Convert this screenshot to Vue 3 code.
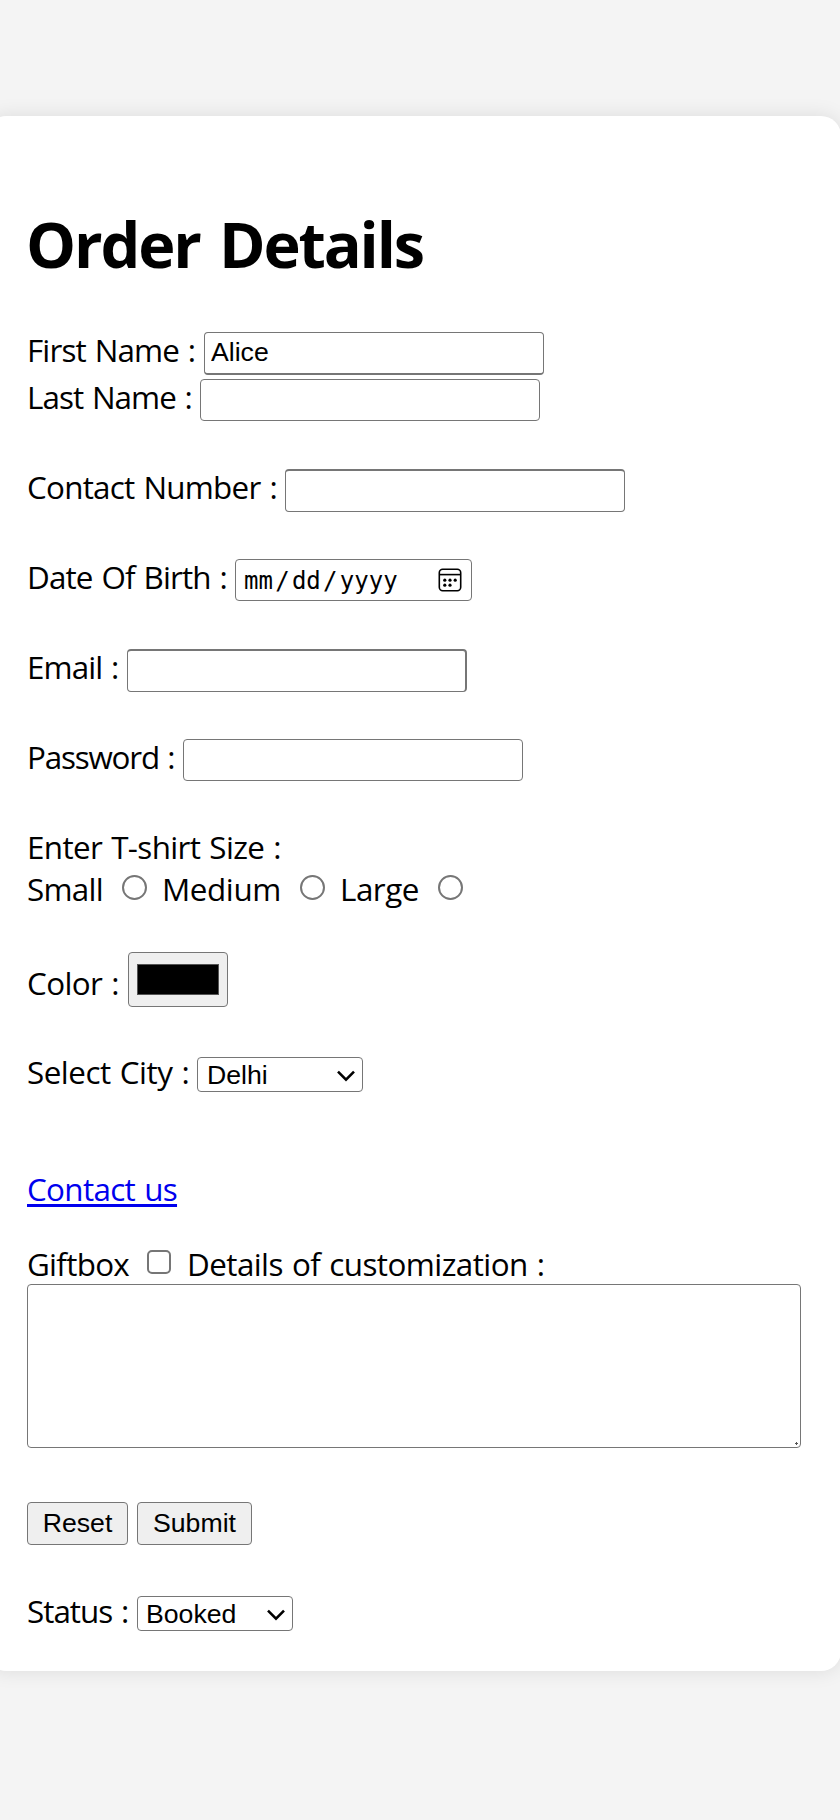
<script setup>
import { ref } from 'vue'

const firstName = ref('Alice')
const city = ref('Delhi')
const status = ref('Booked')
</script>

<template>
  <main class="page">
    <form class="card" @submit.prevent>
      <h1>Order Details</h1>

      <div class="row first">
        <label class="text" for="first">First Name :</label>
        <input id="first" v-model="firstName" class="field heavy-bottom" type="text">
      </div>
      <div class="row last">
        <label class="text" for="last">Last Name :</label>
        <input id="last" class="field" type="text">
      </div>
      <div class="row contact">
        <label class="text" for="contact">Contact Number :</label>
        <input id="contact" class="field heavy-top" type="tel">
      </div>
      <div class="row birth">
        <span class="text">Date Of Birth :</span>
        <div class="date">
          <span>mm</span><i>/</i><span>dd</span><i>/</i><span>yyyy</span>
          <svg class="calendar" viewBox="0 0 24 24" width="24" height="24" fill="none" stroke="#000" stroke-width="1.6">
            <rect x="1.3" y="1.3" width="21.4" height="21.4" rx="3.4" />
            <path d="M1.3 6.6h21.4" />
            <g fill="#000" stroke="none">
              <circle cx="6.8" cy="12.2" r="1.6" /><circle cx="12" cy="12.2" r="1.6" /><circle cx="17.2" cy="12.2" r="1.6" />
              <circle cx="6.8" cy="17.2" r="1.6" /><circle cx="12" cy="17.2" r="1.6" />
            </g>
          </svg>
        </div>
      </div>
      <div class="row email">
        <label class="text" for="email">Email :</label>
        <input id="email" class="field heavy-top heavy-right" type="email">
      </div>
      <div class="row password">
        <label class="text" for="password">Password :</label>
        <input id="password" class="field" type="password">
      </div>

      <div class="row size-title"><span class="text">Enter T-shirt Size :</span></div>
      <div class="row sizes">
        <span class="text small">Small</span><input class="radio" type="radio" name="size">
        <span class="text medium">Medium</span><input class="radio" type="radio" name="size">
        <span class="text large">Large</span><input class="radio" type="radio" name="size">
      </div>

      <div class="row color">
        <span class="text">Color :</span>
        <div class="swatch"><div class="swatch-fill"></div></div>
      </div>

      <div class="row city">
        <label class="text" for="city">Select City :</label>
        <div class="select-box">
          <select id="city" v-model="city"><option>Delhi</option></select>
          <svg class="chevron" viewBox="0 0 18 12" width="18" height="12" fill="none" stroke="#000" stroke-width="2.6">
            <path d="M1 1.6 9 9.6l8-8" />
          </svg>
        </div>
      </div>

      <div class="row link"><a class="text" href="#">Contact us</a></div>

      <div class="row gift">
        <label class="text giftbox" for="gift">Giftbox</label>
        <input id="gift" class="check" type="checkbox">
        <label class="text details" for="details">Details of customization :</label>
      </div>
      <div class="area-box">
        <textarea id="details"></textarea>
        <svg class="grip" viewBox="0 0 3 3" width="3" height="3"><path d="M0 1.5h3M1.5 0v3" stroke="#555" /></svg>
      </div>

      <div class="buttons">
        <button class="reset" type="reset">Reset</button>
        <button class="submit" type="submit">Submit</button>
      </div>

      <div class="row status">
        <label class="text" for="status">Status :</label>
        <div class="select-box">
          <select id="status" v-model="status"><option>Booked</option></select>
          <svg class="chevron" viewBox="0 0 18 12" width="18" height="12" fill="none" stroke="#000" stroke-width="2.6">
            <path d="M1 1.6 9 9.6l8-8" />
          </svg>
        </div>
      </div>
    </form>
  </main>
</template>

<style>
body { background: #f4f4f4; }
</style>

<style scoped>
* { box-sizing: border-box; }
.page {
  height: 1820px;
  padding-top: 116px;
  overflow: hidden;
  background: #f4f4f4;
  color: #000;
  font-family: "Open Sans", "Noto Sans", sans-serif;
}
.card {
  width: 855px;
  height: 1555px;
  margin-left: -14px;
  padding: 88px 40px 0 41px;
  border-radius: 20px;
  background: #fff;
  box-shadow: 0 0 20px rgba(0, 0, 0, .1);
}
h1 {
  height: 80px;
  margin: 0 0 48px;
  font-size: 63px;
  font-weight: 700;
  line-height: 80px;
  letter-spacing: -2.15px;
  word-spacing: 5px;
  text-indent: -1px;
  white-space: nowrap;
}
.row { display: flex; align-items: flex-start; height: 90px; }
.text { flex: none; font-size: 31.4px; line-height: 36px; white-space: nowrap; word-spacing: 1.5px; }

.first { height: 47px; }
.first .text { width: 177px; letter-spacing: -.85px; }
.last .text { width: 173px; letter-spacing: -.95px; }
.contact .text { width: 258px; letter-spacing: -.75px; }
.birth .text { width: 208px; letter-spacing: -.85px; }
.email .text { width: 100px; letter-spacing: -.9px; }
.password .text { width: 156px; letter-spacing: -1.2px; }
.size-title { height: 42px; }
.size-title .text { letter-spacing: -.63px; }
.sizes { height: 81px; }
.small { width: 95px; letter-spacing: -.75px; }
.medium { width: 138px; margin-left: 15px; letter-spacing: -.4px; }
.large { width: 98px; margin-left: 15px; letter-spacing: -.5px; }
.color { height: 105px; }
.color .text { width: 101px; padding-top: 13px; letter-spacing: -.6px; }
.city { height: 114px; }
.city .text { width: 170px; margin-top: -3px; letter-spacing: -.5px; }
.link { height: 75px; }
.link .text {
  color: #0000ee;
  letter-spacing: -.66px;
  text-decoration: underline;
  text-decoration-thickness: 2.5px;
  text-underline-offset: 3px;
  text-decoration-skip-ink: none;
}
.gift { height: 38px; }
.giftbox { width: 120px; letter-spacing: -.71px; }
.details { margin-left: 16px; letter-spacing: -.57px; }
.status .text { width: 110px; margin-top: -3px; letter-spacing: -1px; }

.field, select, textarea, .date {
  margin: 0;
  border: 1px solid #767676;
  border-radius: 4px;
  background: #fff;
  color: #000;
  outline: none;
  appearance: none;
}
.field, select, button { font: 26.67px "Liberation Sans", Arial, sans-serif; }
.field { width: 340px; height: 42px; padding: 0 6px 2px; }
.heavy-bottom { height: 43px; border-bottom-width: 2px; }
.heavy-top { height: 43px; border-top-width: 2px; }
.heavy-right { border-right-width: 2px; }

.date {
  display: flex;
  align-items: center;
  width: 237px;
  height: 42px;
  padding: 0 9px 0 8px;
  font: 24px "DejaVu Sans Mono", monospace;
}
.date span, .date i { padding-top: 1px; }
.date i { width: 19px; font-style: normal; text-align: center; }
.calendar { margin-left: auto; }

.radio, .check {
  flex: none;
  width: 25px;
  height: 25px;
  margin: 4px 0 0;
  border: 2px solid #767676;
  border-radius: 50%;
  background: #fff;
  appearance: none;
}
.check { width: 24px; height: 24px; border-radius: 5px; }

.swatch {
  width: 100px;
  height: 55px;
  padding: 11px 8px;
  border: 1px solid #767676;
  border-radius: 4px;
  background: #efefef;
}
.swatch-fill { height: 31px; border: 1.5px solid #555; background: #000; }

.select-box { position: relative; width: 166px; height: 35px; }
.status .select-box { width: 156px; }
select { display: block; width: 100%; height: 100%; padding: 0 9px; }
.status select { padding: 0 8px; }
.chevron { position: absolute; right: 8px; top: 13px; }

.area-box { position: relative; width: 774px; height: 164px; }
textarea { display: block; width: 100%; height: 100%; resize: none; }
.grip { position: absolute; right: 3px; bottom: 3px; }

.buttons { display: flex; gap: 9px; height: 148px; padding-top: 54px; }
button {
  height: 43px;
  padding: 0;
  border: 1px solid #767676;
  border-radius: 4px;
  background: #efefef;
  color: #000;
}
.reset { width: 101px; }
.submit { width: 115px; }
</style>
